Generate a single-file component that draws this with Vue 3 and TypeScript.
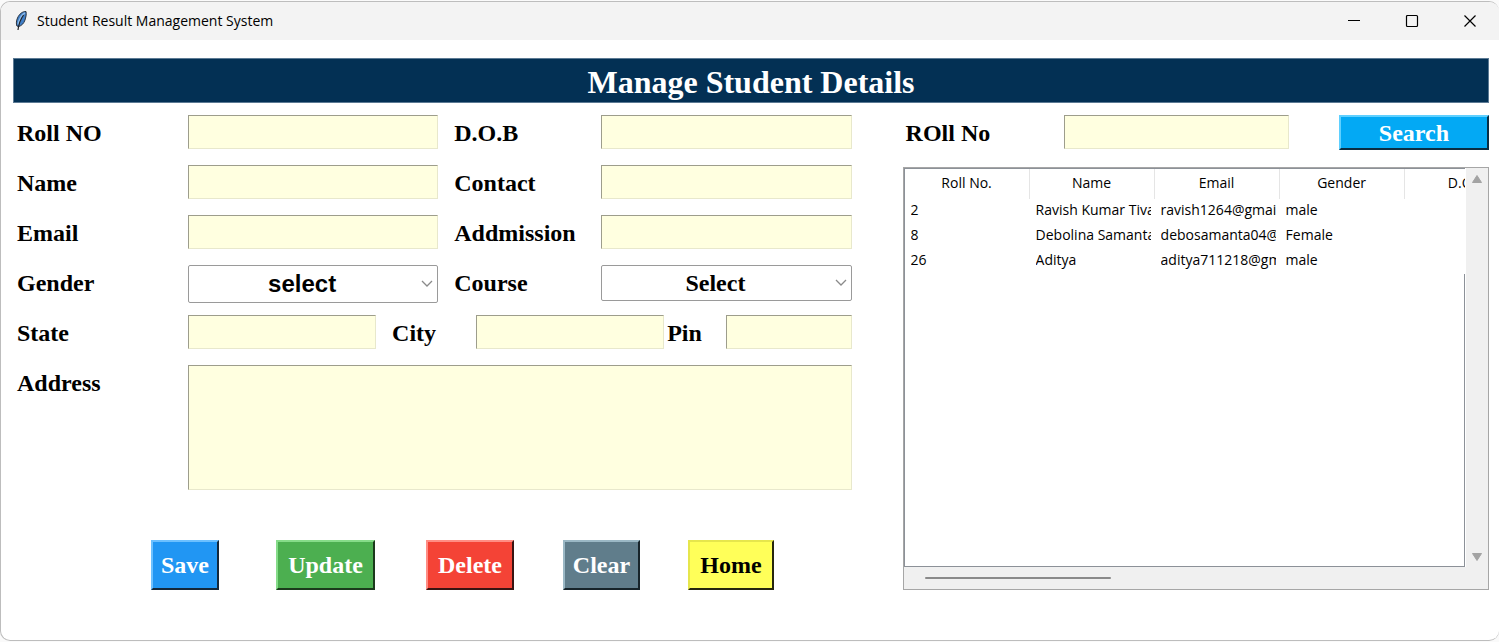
<script setup lang="ts">
import { ref } from 'vue'

interface Student {
  roll: string
  name: string
  email: string
  gender: string
  dob: string
}

const headings: string[] = ['Roll No.', 'Name', 'Email', 'Gender', 'D.O.B']

const students: Student[] = [
  { roll: '2', name: 'Ravish Kumar Tivary', email: 'ravish1264@gmail.com', gender: 'male', dob: '' },
  { roll: '8', name: 'Debolina Samanta', email: 'debosamanta04@gmail.com', gender: 'Female', dob: '' },
  { roll: '26', name: 'Aditya', email: 'aditya711218@gmail.com', gender: 'male', dob: '' },
]

const gender = ref('select')
const course = ref('Select')
</script>

<template>
  <div class="screen">
    <div class="window">
      <header class="titlebar">
        <svg class="feather" viewBox="0 0 14 22" width="14" height="22" aria-hidden="true">
          <path d="M12 1.500C8.600 1.300 5.200 4 3.500 8c-1.200 2.800-1.500 5.400-.6 8l1.700.6c3.200-1 5.300-3.300 6.400-6.600.7-2.400 1.700-5.600 1-8.500z" fill="#3f7fc8" stroke="#2b3440" stroke-width="1" />
          <path d="M10.800 2.800C7.600 5.200 5 9.500 4.200 14.500" fill="none" stroke="#8fbbe8" stroke-width="1.600" />
          <path d="M9.600 5C7 8.500 4.900 12.500 4 20" fill="none" stroke="#20242a" stroke-width="1.200" />
        </svg>
        <h1 class="caption">Student Result Management System</h1>
        <div class="controls">
          <button type="button" aria-label="Minimize">
            <svg viewBox="0 0 14 14" width="14" height="14"><path d="M1 6.500h12" stroke="#000" fill="none" /></svg>
          </button>
          <button type="button" aria-label="Maximize">
            <svg viewBox="0 0 14 14" width="14" height="14"><rect x="1.500" y="1.500" width="11" height="11" rx="1" stroke="#000" stroke-width="1.200" fill="none" /></svg>
          </button>
          <button type="button" aria-label="Close">
            <svg viewBox="0 0 14 14" width="14" height="14"><path d="M1.500 1.500l11 11M12.500 1.500l-11 11" stroke="#000" stroke-width="1.200" fill="none" /></svg>
          </button>
        </div>
      </header>

      <main class="content">
        <h2 class="banner">Manage Student Details</h2>

        <div class="panes">
          <form class="details" @submit.prevent>
            <div class="row pair">
              <label for="roll">Roll NO</label>
              <input id="roll" class="entry" type="text" />
              <label for="dob" class="inner">D.O.B</label>
              <input id="dob" class="entry" type="text" />
            </div>
            <div class="row pair">
              <label for="name">Name</label>
              <input id="name" class="entry" type="text" />
              <label for="contact" class="inner">Contact</label>
              <input id="contact" class="entry" type="text" />
            </div>
            <div class="row pair">
              <label for="email">Email</label>
              <input id="email" class="entry" type="text" />
              <label for="admission" class="inner">Addmission</label>
              <input id="admission" class="entry" type="text" />
            </div>
            <div class="row pair">
              <label for="gender">Gender</label>
              <div class="combo sans">
                <select id="gender" v-model="gender">
                  <option>select</option>
                  <option>Male</option>
                  <option>Female</option>
                </select>
                <svg class="chevron" viewBox="0 0 12 8" width="12" height="8"><path d="M1 1l5 5 5-5" stroke="#8a8a8a" stroke-width="1.300" fill="none" /></svg>
              </div>
              <label for="course" class="inner">Course</label>
              <div class="combo">
                <select id="course" v-model="course">
                  <option>Select</option>
                </select>
                <svg class="chevron" viewBox="0 0 12 8" width="12" height="8"><path d="M1 1l5 5 5-5" stroke="#8a8a8a" stroke-width="1.300" fill="none" /></svg>
              </div>
            </div>
            <div class="row triple">
              <label for="state">State</label>
              <input id="state" class="entry" type="text" />
              <label for="city" class="inner">City</label>
              <input id="city" class="entry" type="text" />
              <label for="pin" class="tight">Pin</label>
              <input id="pin" class="entry" type="text" />
            </div>
            <div class="row single">
              <label for="address">Address</label>
              <textarea id="address" class="entry area"></textarea>
            </div>
            <div class="actions">
              <button type="button" class="btn save">Save</button>
              <button type="button" class="btn update">Update</button>
              <button type="button" class="btn delete">Delete</button>
              <button type="button" class="btn clear">Clear</button>
              <button type="button" class="btn home">Home</button>
            </div>
          </form>

          <section class="records">
            <form class="search" @submit.prevent>
              <label for="find">ROll No</label>
              <input id="find" class="entry" type="text" />
              <button type="submit" class="btn find">Search</button>
            </form>
            <div class="frame">
              <div class="tree">
                <table>
                  <thead>
                    <tr>
                      <th v-for="h in headings" :key="h" scope="col">{{ h }}</th>
                    </tr>
                  </thead>
                  <tbody>
                    <tr v-for="s in students" :key="s.roll">
                      <td><span>{{ s.roll }}</span></td>
                      <td><span>{{ s.name }}</span></td>
                      <td><span>{{ s.email }}</span></td>
                      <td><span>{{ s.gender }}</span></td>
                      <td><span>{{ s.dob }}</span></td>
                    </tr>
                  </tbody>
                </table>
                <div class="rest"></div>
              </div>
              <div class="vbar">
                <svg viewBox="0 0 12 8" width="12" height="8"><path d="M6 .5l4.500 7h-9z" fill="#a3a3a3" stroke="#a3a3a3" stroke-linejoin="round" /></svg>
                <svg viewBox="0 0 12 8" width="12" height="8"><path d="M6 7.500l4.500-7h-9z" fill="#a3a3a3" stroke="#a3a3a3" stroke-linejoin="round" /></svg>
              </div>
              <div class="hbar"><div class="thumb"></div></div>
            </div>
          </section>
        </div>
      </main>
    </div>
  </div>
</template>

<style>
body {
  margin: 0;
  background: #fff;
}
</style>

<style scoped>
* {
  box-sizing: border-box;
}

.screen {
  display: flex;
  min-height: 100vh;
  padding: 1px 0;
  background: #fafafa;
  font-family: "Liberation Serif", serif;
  color: #000;
}

.window {
  flex: 1;
  min-width: 0;
  border: 1px solid #bdbdbd;
  border-right: none;
  border-radius: 10px;
  background: #fff;
  overflow: hidden;
}

.titlebar {
  display: flex;
  align-items: center;
  height: 38px;
  padding-left: 13px;
  background: #f3f3f3;
}

.caption {
  flex: 1;
  margin: 0 0 0 9px;
  font: 400 14px/20px "Open Sans", "Noto Sans", sans-serif;
}

.controls {
  display: flex;
}

.controls button {
  display: flex;
  align-items: center;
  justify-content: center;
  width: 58px;
  height: 38px;
  padding: 0;
  border: none;
  background: none;
}

.content {
  padding: 18px 10px 0 12px;
}

.banner {
  margin: 0;
  height: 45px;
  border: 1px solid #5c7a94;
  background: #033054;
  color: #fff;
  font-size: 32px;
  font-weight: 700;
  line-height: 46px;
  text-align: center;
}

.panes {
  display: grid;
  grid-template-columns: 834fr 586fr;
  column-gap: 51px;
  margin-top: 12px;
  padding-left: 4px;
}

label {
  font-size: 24px;
  font-weight: 700;
  line-height: 36px;
  white-space: nowrap;
}

.row {
  display: grid;
  align-items: start;
  min-height: 50px;
}

.pair {
  grid-template-columns: 171px 1fr 163px 1fr;
}

.triple {
  grid-template-columns: 171px 3fr 100px 3fr 62px 2fr;
}

.single {
  grid-template-columns: 171px 1fr;
}

.inner {
  padding-left: 16px;
}

.tight {
  padding-left: 3px;
}

.entry {
  width: 100%;
  min-width: 0;
  height: 34px;
  margin: 0;
  padding: 0 4px;
  border: 1px solid;
  border-color: #9d9d8c #e8e8cc #e8e8cc #9d9d8c;
  border-radius: 0;
  background: #ffffe0;
  font: 700 24px/30px "Liberation Serif", serif;
  outline: none;
}

.area {
  display: block;
  height: 125px;
  resize: none;
}

.combo {
  display: grid;
  align-items: center;
  min-width: 0;
}

.combo > * {
  grid-area: 1 / 1;
}

.combo select {
  width: 100%;
  height: 36px;
  padding: 0 24px 0 2px;
  border: 1px solid #9a9a9a;
  border-radius: 2px;
  background: #fff;
  color: #000;
  font: 700 24px/32px "Liberation Serif", serif;
  text-align: center;
  text-align-last: center;
  appearance: none;
  outline: none;
}

.sans select {
  height: 38px;
  font-family: "Liberation Sans", sans-serif;
}

.chevron {
  justify-self: end;
  margin-right: 5px;
  pointer-events: none;
}

.actions {
  display: flex;
  margin-top: 50px;
  padding-left: 134px;
}

.btn {
  height: 50px;
  padding: 0;
  border: 2px solid;
  border-radius: 0;
  color: #fff;
  font: 700 24px/32px "Liberation Serif", serif;
}

.save {
  width: 68px;
  margin-right: 57px;
  border-color: #6cc0ff #14283a #14283a #6cc0ff;
  background: #2196f3;
}

.update {
  width: 99px;
  margin-right: 51px;
  border-color: #86dc89 #1b3a1c #1b3a1c #86dc89;
  background: #4caf50;
}

.delete {
  width: 88px;
  margin-right: 49px;
  border-color: #ff8d84 #3a1412 #3a1412 #ff8d84;
  background: #f44336;
}

.clear {
  width: 77px;
  margin-right: 48px;
  border-color: #9bb8c5 #17242a #17242a #9bb8c5;
  background: #607d8b;
}

.home {
  width: 86px;
  border-color: #e6e64c #26260e #26260e #e6e64c;
  background: #ffff59;
  color: #000;
}

.records {
  min-width: 0;
}

.search {
  display: grid;
  grid-template-columns: 158px 225fr 50px 150fr;
  align-items: start;
  padding-left: 3px;
}

.find {
  grid-column: 4;
  height: 35px;
  border-color: #5fd0ff #0a2d42 #0a2d42 #5fd0ff;
  background: #03a9f4;
  line-height: 28px;
}

.frame {
  display: grid;
  grid-template-columns: minmax(0, 1fr) 23px;
  grid-template-rows: 399px 22px;
  margin-top: 16px;
  border: 1px solid #a6a6a6;
  background: #f0f0f0;
}

.tree {
  display: flex;
  flex-direction: column;
  border-top: 1px solid #8c9198;
  border-left: 1px solid #8c9198;
  border-bottom: 1px solid #8c9198;
  background: #fff;
  overflow: hidden;
}

.rest {
  flex: 1;
  border-right: 1px solid #8c9198;
}

table {
  width: 625px;
  border-spacing: 0;
  table-layout: fixed;
  font: 400 14px/22px "Open Sans", "Noto Sans", sans-serif;
}

th {
  height: 30px;
  padding: 0 0 2px;
  border-right: 1px solid #e5e5e5;
  font-weight: 400;
  text-align: center;
}

td {
  height: 25px;
  padding: 0 4px 0 6px;
  vertical-align: top;
}

td span {
  display: block;
  height: 24px;
  overflow: hidden;
  white-space: nowrap;
}

.vbar {
  display: flex;
  flex-direction: column;
  align-items: center;
  justify-content: space-between;
  padding: 7px 0 6px;
  border-left: 1px solid #fff;
}

.hbar {
  grid-column: 1 / -1;
  display: flex;
  align-items: center;
  padding-left: 21px;
}

.thumb {
  width: 33%;
  height: 2px;
  border-radius: 1px;
  background: #8a8a8a;
}
</style>
